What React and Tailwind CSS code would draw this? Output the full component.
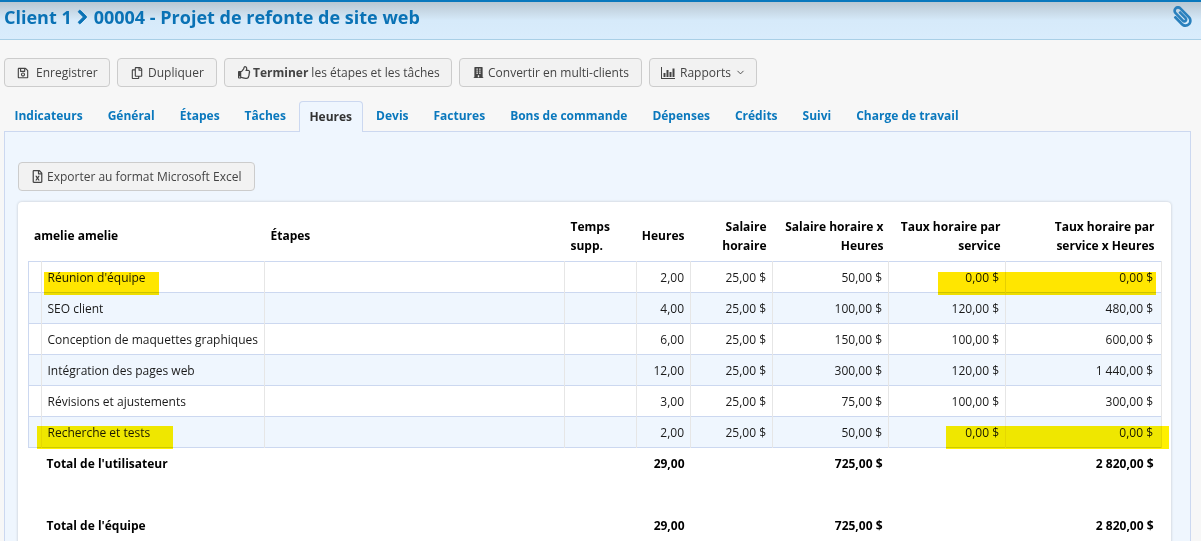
import { FaChevronRight, FaPaperclip, FaRegSave, FaRegCopy, FaRegThumbsUp, FaBuilding, FaRegFileExcel } from "react-icons/fa";
import { LuChevronDown } from "react-icons/lu";

const tabs = ["Indicateurs", "Général", "Étapes", "Tâches", "Heures", "Devis", "Factures", "Bons de commande", "Dépenses", "Crédits", "Suivi", "Charge de travail"];

const rows = [
  ["Réunion d'équipe", "2,00", "25,00 $", "50,00 $", "0,00 $", "0,00 $"],
  ["SEO client", "4,00", "25,00 $", "100,00 $", "120,00 $", "480,00 $"],
  ["Conception de maquettes graphiques", "6,00", "25,00 $", "150,00 $", "100,00 $", "600,00 $"],
  ["Intégration des pages web", "12,00", "25,00 $", "300,00 $", "120,00 $", "1 440,00 $"],
  ["Révisions et ajustements", "3,00", "25,00 $", "75,00 $", "100,00 $", "300,00 $"],
  ["Recherche et tests", "2,00", "25,00 $", "50,00 $", "0,00 $", "0,00 $"],
];

const ChartIcon = () => (
  <svg width="14" height="12" viewBox="0 0 14 12" fill="#444">
    <path d="M0 0h1v11h13v1H0z" />
    <path d="M2.500 6h2v4h-2zM5.500 3h2v7h-2zM8.500 5h2v5h-2zM11.500 1.500h2V10h-2z" />
  </svg>
);

const Button = ({ className = "", children }) => (
  <button className={`flex h-[29px] items-center rounded border border-[#cccccc] bg-[#f2f2f2] text-[12px] text-[#444444] ${className}`}>
    {children}
  </button>
);

const TotalRow = ({ label, hours, wage, total }) => (
  <tr className="h-[46px] align-top font-bold text-black">
    <td />
    <td className="pt-[7px] pl-[5px]" colSpan={2}>{label}</td>
    <td />
    <td className="pt-[7px] pr-[6px] text-right">{hours}</td>
    <td />
    <td className="pt-[7px] pr-[6px] text-right">{wage}</td>
    <td />
    <td className="pt-[7px] pr-[8px] text-right">{total}</td>
  </tr>
);

export default function App() {
  return (
    <div className="relative h-[541px] overflow-hidden bg-[#f7f7f7] font-['Open_Sans',sans-serif]">
      <header className="flex h-[40px] items-start justify-between border-t-2 border-b border-t-[#0a78bd] border-b-[#a9cfe6] bg-gradient-to-b from-[#b9c7d2] via-[#d6eafa] via-50% to-[#d9ecfc] pl-[4px] pr-[8px]">
        <h1 className="flex items-center text-[18px] leading-[30px] font-bold text-[#0a72b5]">
          Client 1
          <FaChevronRight className="mr-[6px] ml-[5px] h-[16px] w-[11px] stroke-[30px]" />
          00004 - Projet de refonte de site web
        </h1>
        <FaPaperclip className="mt-[4px] -scale-x-100 text-[21px] text-[#2a80bd]" />
      </header>

      <div className="flex gap-[7px] pt-[18px] pl-[4px]">
        <Button className="w-[106px] pl-[12px]">
          <FaRegSave className="mr-[7px] text-[12px]" />
          Enregistrer
        </Button>
        <Button className="w-[100px] pl-[13px]">
          <FaRegCopy className="mr-[5px] text-[12px]" />
          Dupliquer
        </Button>
        <Button className="w-[228px] pl-[13px]">
          <FaRegThumbsUp className="mr-[2px] text-[13px]" />
          <span className="mr-[3px] font-bold">Terminer</span> les étapes et les tâches
        </Button>
        <Button className="w-[183px] pl-[13px]">
          <FaBuilding className="mr-[4px] text-[11px]" />
          Convertir en multi-clients
        </Button>
        <Button className="w-[108px] pl-[11px]">
          <span className="mr-[5px]"><ChartIcon /></span>
          Rapports
          <LuChevronDown className="ml-[4px] text-[11px]" />
        </Button>
      </div>

      <nav className="relative z-10 mt-[14px] flex h-[30px] pl-[2px] text-[12px] font-bold text-[#0a78bd]">
        {tabs.map((t) =>
          t === "Heures" ? (
            <a key={t} className="mr-[1px] ml-[0.500px] flex h-[31px] items-center rounded-t border border-b-0 border-[#ccd8f0] bg-[#eff6fe] px-[9.500px] pb-[1px] text-[#333333]">{t}</a>
          ) : (
            <a key={t} className="flex h-[29px] items-center px-[12.500px]">{t}</a>
          )
        )}
      </nav>

      <main className="ml-[4px] mr-[10px] h-[411px] border border-[#ccd8f0] bg-[#eff6fe] pt-[30px] pl-[13px]">
        <Button className="w-[237px] pl-[12px]">
          <FaRegFileExcel className="mr-[3px] text-[13px]" />
          Exporter au format Microsoft Excel
        </Button>

        <section className="mt-[11px] h-[400px] w-[1153px] rounded-t bg-white pt-[13px] pl-[10px] shadow-[0_0_3px_rgba(0,0,0,0.2)]">
          <table className="w-[1133px] table-fixed border-collapse text-[12px] text-[#1a1a1a]">
            <colgroup>
              <col className="w-[13px]" />
              <col className="w-[223px]" />
              <col className="w-[300px]" />
              <col className="w-[72px]" />
              <col className="w-[54px]" />
              <col className="w-[82px]" />
              <col className="w-[116px]" />
              <col className="w-[117px]" />
              <col className="w-[156px]" />
            </colgroup>
            <thead>
              <tr className="h-[46px] align-middle font-bold text-black">
                <th className="pb-[3px] text-left font-bold" colSpan={2}><span className="pl-[5.500px]">amelie amelie</span></th>
                <th className="pb-[3px] pl-[6px] text-left font-bold">Étapes</th>
                <th className="pb-[3px] pl-[6px] text-left leading-[19px] font-bold">Temps supp.</th>
                <th className="pb-[3px] pr-[6px] text-right font-bold">Heures</th>
                <th className="pb-[3px] pr-[6px] text-right leading-[19px] font-bold">Salaire horaire</th>
                <th className="pb-[3px] pr-[5px] text-right leading-[19px] font-bold">Salaire horaire x Heures</th>
                <th className="pb-[3px] pr-[5px] text-right leading-[19px] font-bold">Taux horaire par service</th>
                <th className="pb-[3px] pr-[7px] text-right leading-[19px] font-bold">Taux horaire par<br />service x Heures</th>
              </tr>
            </thead>
            <tbody className="border-y border-[#ccd8f0]">
              {rows.map((r, i) => (
                <tr key={r[0]} className={`h-[31px] border-b border-[#ccd8f0] ${i % 2 ? "bg-[#eff6fe]" : "bg-white"}`}>
                  <td className="border-l border-[#ccd8f0]" />
                  <td className="border-l border-[#e6e6e6] pt-[2px] pl-[5.500px]">{r[0]}</td>
                  <td className="border-l border-[#e6e6e6]" />
                  <td className="border-l border-[#e6e6e6]" />
                  <td className="border-l border-[#e6e6e6] pt-[2px] pr-[6px] text-right">{r[1]}</td>
                  <td className="border-l border-[#e6e6e6] pt-[2px] pr-[6px] text-right">{r[2]}</td>
                  <td className="border-l border-[#e6e6e6] pt-[2px] pr-[6px] text-right">{r[3]}</td>
                  <td className="border-l border-[#e6e6e6] pt-[2px] pr-[6px] text-right">{r[4]}</td>
                  <td className="border-x border-[#e6e6e6] pt-[2px] pr-[8px] text-right">{r[5]}</td>
                </tr>
              ))}
            </tbody>
            <tbody>
              <TotalRow label="Total de l'utilisateur" hours="29,00" wage="725,00 $" total="2 820,00 $" />
              <tr className="h-[17px]"><td colSpan={9} /></tr>
              <TotalRow label="Total de l'équipe" hours="29,00" wage="725,00 $" total="2 820,00 $" />
            </tbody>
          </table>
        </section>
      </main>

      {/* surlignage jaune par-dessus le tableau */}
      <div className="absolute top-[272px] left-[44px] h-[23px] w-[115px] bg-[#ffe600] mix-blend-multiply" />
      <div className="absolute top-[272px] left-[938px] h-[23px] w-[218px] bg-[#ffe600] mix-blend-multiply" />
      <div className="absolute top-[426px] left-[37px] h-[23px] w-[136px] bg-[#fff000] mix-blend-multiply" />
      <div className="absolute top-[426px] left-[946px] h-[23px] w-[223px] bg-[#fff000] mix-blend-multiply" />
    </div>
  );
}
